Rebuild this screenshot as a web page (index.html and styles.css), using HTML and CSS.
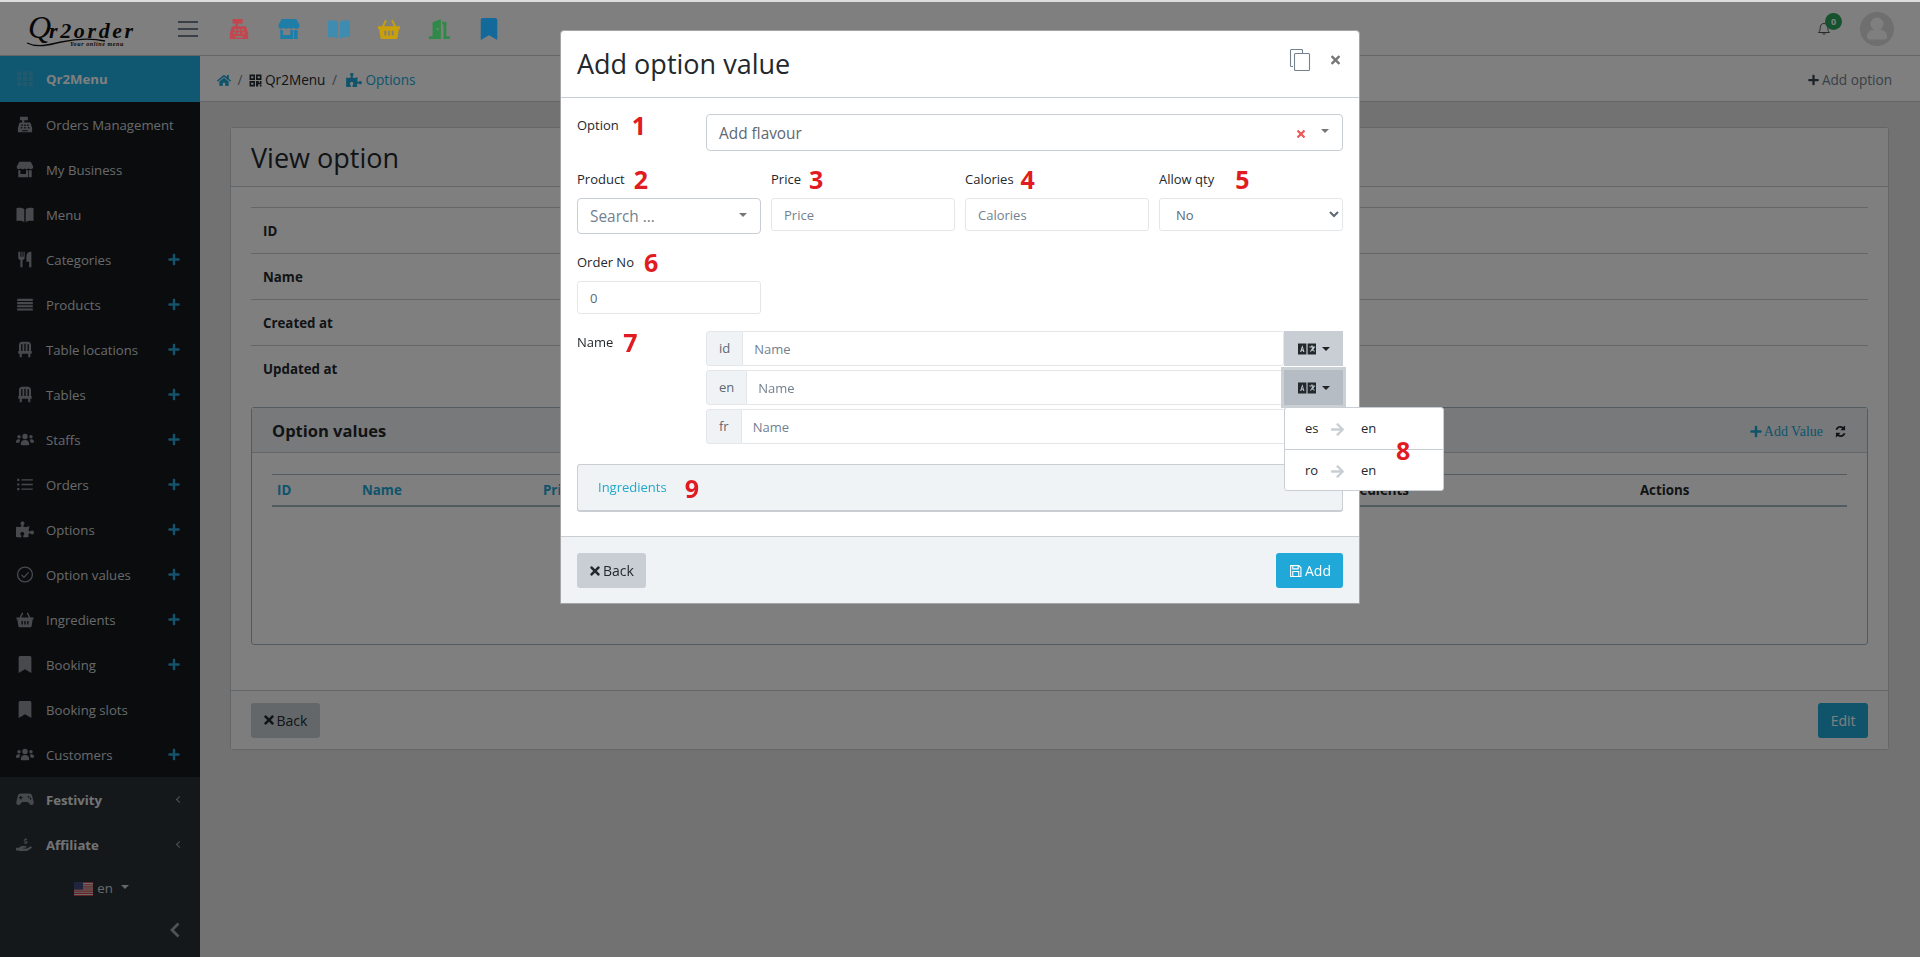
FILE: index.html
```html
<!DOCTYPE html>
<html lang="en">
<head>
<meta charset="utf-8">
<title>Add option value</title>
<link rel="stylesheet" href="styles.css">
</head>
<body>
<svg class="sprite" aria-hidden="true">
  <symbol id="i-plus" viewBox="0 0 448 512"><path d="M416 208H272V64c0-17.67-14.33-32-32-32h-32c-17.67 0-32 14.33-32 32v144H32c-17.67 0-32 14.33-32 32v32c0 17.67 14.33 32 32 32h144v144c0 17.67 14.33 32 32 32h32c17.67 0 32-14.33 32-32V304h144c17.67 0 32-14.33 32-32v-32c0-17.67-14.33-32-32-32z"/></symbol>
  <symbol id="i-bookmark" viewBox="0 0 384 512"><path d="M0 512V48C0 21.49 21.49 0 48 0h288c26.51 0 48 21.49 48 48v464L192 400 0 512z"/></symbol>
  <symbol id="i-home" viewBox="0 0 576 512"><path d="M280.37 148.26L96 300.11V464a16 16 0 0 0 16 16l112.06-.29a16 16 0 0 0 15.92-16V368a16 16 0 0 1 16-16h64a16 16 0 0 1 16 16v95.64a16 16 0 0 0 16 16.05L464 480a16 16 0 0 0 16-16V300L295.67 148.26a12.19 12.19 0 0 0-15.3 0zM571.6 251.47L488 182.56V44.05a12 12 0 0 0-12-12h-56a12 12 0 0 0-12 12v72.61L318.47 43a48 48 0 0 0-61 0L4.34 251.47a12 12 0 0 0-1.6 16.9l25.5 31A12 12 0 0 0 45.15 301l235.22-193.74a12.19 12.19 0 0 1 15.3 0L530.9 301a12 12 0 0 0 16.9-1.6l25.5-31a12 12 0 0 0-1.7-16.93z"/></symbol>
  <symbol id="i-times" viewBox="0 0 352 512"><path d="M242.72 256l100.07-100.07c12.28-12.28 12.28-32.19 0-44.48l-22.24-22.24c-12.28-12.28-32.19-12.28-44.48 0L176 189.28 75.93 89.21c-12.28-12.28-32.19-12.28-44.48 0L9.21 111.45c-12.28 12.28-12.28 32.19 0 44.48L109.28 256 9.21 356.07c-12.28 12.28-12.28 32.19 0 44.48l22.24 22.24c12.28 12.28 32.2 12.28 44.48 0L176 322.72l100.07 100.07c12.28 12.28 32.2 12.28 44.48 0l22.24-22.24c12.28-12.28 12.28-32.19 0-44.48L242.72 256z"/></symbol>
  <symbol id="i-arrow" viewBox="0 0 448 512"><path d="M190.5 66.9l22.2-22.2c9.4-9.4 24.6-9.4 33.9 0L441 239c9.4 9.4 9.4 24.6 0 33.9L246.6 467.3c-9.4 9.4-24.6 9.4-33.9 0l-22.2-22.2c-9.5-9.5-9.3-25 .4-34.3L311.4 296H24c-13.3 0-24-10.7-24-24v-32c0-13.3 10.7-24 24-24h287.4L190.9 101.2c-9.8-9.3-10-24.8-.4-34.3z"/></symbol>
  <symbol id="i-puzzle" viewBox="0 0 576 512"><path d="M519.442 288.651c-41.519 0-59.5 31.593-82.058 31.593C377.409 320.244 432 144 432 144s-196.288 80-196.288-3.297c0-35.827 36.288-46.25 36.288-85.985C272 19.216 243.885 0 210.539 0c-34.654 0-66.366 18.891-66.366 56.346 0 41.364 31.711 59.277 31.711 81.75C175.885 207.719 0 166.758 0 166.758v333.237s178.635 41.047 178.635-28.662c0-22.473-40-40.107-40-81.471 0-37.456 29.25-56.346 63.577-56.346 33.673 0 61.788 19.216 61.788 54.717 0 39.735-36.288 50.158-36.288 85.985 0 60.803 129.675 25.73 181.23 25.73 0 0-34.725-120.101 25.827-120.101 35.962 0 46.423 36.152 86.308 36.152C556.712 416 576 387.99 576 354.443c0-34.199-18.962-65.792-56.558-65.792z"/></symbol>
  <symbol id="i-register" viewBox="0 0 24 24"><path fill-rule="evenodd" d="M5 1h11v5H11v3h7.5c.8 0 1.4.5 1.6 1.2L22 17v6H2v-6l1.900-6.800C4.100 9.500 4.700 9 5.500 9H8V6H5zM7 12v2h2v-2zm4 0v2h2v-2zm4 0v2h2v-2zM6 15.500v2h2v-2zm5 0v2h2v-2zm5 0v2h2v-2zM8 20v1.500h8V20z"/></symbol>
  <symbol id="i-store" viewBox="0 0 24 24"><path fill-rule="evenodd" d="M4 1h16l3.500 6.500c.5 2.500-1.300 4.300-3.500 4.300-1.300 0-2.300-.6-3-1.400-.7.800-1.700 1.400-3 1.400s-2-.6-2.500-1.400c-.6.800-1.500 1.400-2.800 1.400s-2-.6-2.700-1.400c-.7.800-1.800 1.400-3 1.400C1.700 11.800 0 10 .5 7.500zM2.500 13h3v5.500h8V13h3v10h-14zM17.500 13h4v10h-4z"/></symbol>
  <symbol id="i-book" viewBox="0 0 24 24"><path d="M0 3c4-1.200 8.500-.8 11 1.500V23C8.500 20.800 4 20.400 0 21zM24 3c-4-1.200-8.500-.8-11 1.500V23c2.500-2.200 7-2.600 11-2z"/></symbol>
  <symbol id="i-basket" viewBox="0 0 24 24"><path fill-rule="evenodd" d="M7.800 2l1.800 1-3 6h10.800l-3-6 1.800-1 3.500 7H24v3h-1.200l-1.500 9.500c-.1.900-.8 1.500-1.700 1.500H4.400c-.9 0-1.600-.6-1.700-1.500L1.200 12H0V9h4.300zM7 14v5h2v-5zm4 0v5h2v-5zm4 0v5h2v-5z"/></symbol>
  <symbol id="i-door" viewBox="0 0 24 24"><path fill-rule="evenodd" d="M5 20V4.500L14 1v22H1v-3zM10.500 11a1.200 1.200 0 1 0 .01 0zM15.500 4H20v16h4v3h-7V7h-1.500z"/></symbol>
  <symbol id="i-grid" viewBox="0 0 24 24"><path d="M1 2h6v6H1zM9 2h6v6H9zM17 2h6v6h-6zM1 9.500h6v6H1zM9 9.500h6v6H9zM17 9.500h6v6h-6zM1 17h6v6H1zM9 17h6v6H9zM17 17h6v6h-6z"/></symbol>
  <symbol id="i-qr" viewBox="0 0 24 24"><path fill-rule="evenodd" d="M1 1h10v10H1zM4 4v4h4V4zM13 1h10v10H13zM16 4v4h4V4zM1 13h10v10H1zM4 16v4h4v-4zM13 13h5v3h2v-3h3v6h-6v4h-4zM20 20h3v3h-3z"/></symbol>
  <symbol id="i-utensils" viewBox="0 0 24 24"><path d="M4 1h1.500v7H7V1h1.500v7H10V1h1.500v8.500c0 1.800-1.300 3-3 3.300V23H5.500V12.800c-1.700-.3-3-1.500-3-3.300V1zM21 1v22h-3.200v-8H14V7c0-4 3.500-6 7-6z"/></symbol>
  <symbol id="i-list" viewBox="0 0 24 24"><path d="M1 4h22v3H1zM1 8.500h22v3H1zM1 13h22v3H1zM1 17.500h22v3H1z"/></symbol>
  <symbol id="i-listul" viewBox="0 0 24 24"><path d="M1 4h3v3H1zM7 4.500h16v2H7zM1 10.500h3v3H1zM7 11h16v2H7zM1 17h3v3H1zM7 17.500h16v2H7z"/></symbol>
  <symbol id="i-chair" viewBox="0 0 24 24"><path fill-rule="evenodd" d="M8 1h8c2.800 0 4.500 2 4.500 4.500V14h1v4h-2v5h-3v-5H7.500v5h-3v-5h-2v-4h1V5.500C3.500 3 5.200 1 8 1zM6.500 5v9h2V4.500C7.300 4 6.500 4.200 6.500 5zM11 4v10h2V4zM15.500 4.500V14h2V5c0-.8-.8-1-2-.5z"/></symbol>
  <symbol id="i-users" viewBox="0 0 30 24"><circle cx="15" cy="7" r="4.500"/><circle cx="5" cy="7.500" r="2.800"/><circle cx="25" cy="7.500" r="2.800"/><path d="M8 20c0-4.500 2.500-7 7-7s7 2.500 7 7c0 1-.8 1.500-1.500 1.500h-11C8.800 21.500 8 21 8 20zM0 16c0-3 1.500-4.500 4-4.500 1.500 0 2.500.5 3.200 1.200C6 14 5.800 15.500 5.700 17.500H1.500C.5 17.500 0 17 0 16zM30 16c0-3-1.500-4.500-4-4.500-1.500 0-2.500.5-3.200 1.200 1.200 1.300 1.400 2.800 1.500 4.800h4.200c1 0 1.500-.5 1.500-1.500z"/></symbol>
  <symbol id="i-check" viewBox="0 0 24 24"><circle cx="12" cy="12" r="10.500" fill="none" stroke="currentColor" stroke-width="1.800"/><path d="M7 12.500l3.500 3.500L17 9" fill="none" stroke="currentColor" stroke-width="1.800"/></symbol>
  <symbol id="i-festive" viewBox="0 0 30 24"><path fill-rule="evenodd" d="M8 2h14c3 0 4.500 1.500 5 4l2.500 10c.5 3-1.500 5-3.500 5-1.800 0-3-1-4-2.500L20 16H10l-2 2.500C7 20 5.800 21 4 21c-2 0-4-2-3.500-5L3 6c.5-2.500 2-4 5-4zM7 6v2H5v2h2v2h2v-2h2V8H9V6zM21 6a1.500 1.500 0 1 0 .01 0zM24 9a1.500 1.500 0 1 0 .01 0z"/></symbol>
  <symbol id="i-hand" viewBox="0 0 30 24"><path d="M0 17.500h5c2-2 4-3 6-3h5c1.500 0 2 2.500 0 3h-4v1h6l6-3c2-1 3.500 1 2 2.500l-6 4c-.8.500-1.500.7-2.500.7H5.500L4 22H0z"/><path d="M15 1.500h2v1.200c1 .2 1.800.7 2 1.500l-1.500.8c-.3-.5-1-.8-1.700-.8-.7 0-1.200.3-1.200.7 0 1.200 4.600.6 4.600 3.200 0 1-.9 1.800-2.200 2V11.500h-2v-1.400c-1-.2-1.900-.7-2.200-1.600l1.600-.7c.3.600 1 1 1.700 1 .8 0 1.300-.3 1.300-.7 0-1.200-4.600-.6-4.600-3.200 0-1 .8-1.800 2.200-2z"/></symbol>
  <symbol id="i-save" viewBox="0 0 24 24"><path fill="none" stroke="currentColor" stroke-width="2" d="M3 2h15l4 4v16H3zM7 2v6h10V2M7 22v-9h11v9"/></symbol>
  <symbol id="i-lang" viewBox="0 0 30 20"><path fill-rule="evenodd" d="M0 1h14v18H0zM7 4L3.500 15h2l.6-2h2l.6 2h2L7.500 4zM6.600 11l.7-3 .7 3zM16 1h14v18H16zM22 4v2h-3v1.500h5c-.3 1-1 2-2.500 3 .5.500 1 1 1.500 1.200-1 .6-2 1-3.300 1.300l.6 1.500c1.500-.4 3-1 4-1.800 1 .8 2 1.400 3.200 1.800l.5-1.500c-1-.3-1.900-.7-2.700-1.300 1-1 1.900-2.300 2.200-4h1V6h-4V4z"/></symbol>
  <symbol id="i-sync" viewBox="0 0 24 24"><path d="M20.500 1v8.500H12l3-3c-3-2.200-7-1.300-8.500 2.200H2.800C4.500 2.800 11-.2 17 3.500zM3.500 23v-8.500H12l-3 3c3 2.200 7 1.300 8.500-2.200h3.700c-1.700 5.900-8.200 8.900-14.200 5.200z"/></symbol>
</svg>

<div class="topline"></div>
<header class="navbar">
  <div class="logo"><span class="logo-q">Q</span><span class="logo-rest">r2order</span><span class="logo-tag">Your online menu</span>
    <svg class="logo-swash" viewBox="0 0 110 30"><path d="M1 24c10 5 22 2 34-1 14-3 30-4 44-1" fill="none" stroke="#111" stroke-width="1.300"/></svg>
  </div>
  <div class="burger"><span></span><span></span><span></span></div>
  <nav class="quick">
    <svg class="qi q-red"><use href="#i-register"/></svg>
    <svg class="qi q-blue"><use href="#i-store"/></svg>
    <svg class="qi q-sky"><use href="#i-book"/></svg>
    <svg class="qi q-yellow"><use href="#i-basket"/></svg>
    <svg class="qi q-green"><use href="#i-door"/></svg>
    <svg class="qi q-navy"><use href="#i-bookmark"/></svg>
  </nav>
  <div class="nav-right">
    <div class="bell">
      <svg viewBox="0 0 24 24" class="bell-i"><path fill="none" stroke="currentColor" stroke-width="1.600" d="M12 2.500c-4 0-6.500 3-6.500 7 0 5-1 6.500-3 8.500h19c-2-2-3-3.500-3-8.500 0-4-2.500-7-6.500-7zM9.500 18c0 4 5 4 5 0"/></svg>
      <span class="badge">0</span>
    </div>
    <div class="avatar"><svg viewBox="0 0 34 34"><circle cx="17" cy="12" r="6.500"/><path d="M7 25c0-5 3-7 6-7h8c3 0 6 2 6 7 0 1.500-1 2.500-2.500 2.500h-15C8 27.500 7 26.500 7 25z"/></svg></div>
  </div>
</header>

<div class="layout">
  <aside class="sidebar">
    <div class="side-item active"><svg class="si"><use href="#i-grid"/></svg><span>Qr2Menu</span></div>
    <div class="side-list">
      <div class="side-item"><svg class="si"><use href="#i-register"/></svg><span>Orders Management</span></div>
      <div class="side-item"><svg class="si"><use href="#i-store"/></svg><span>My Business</span></div>
      <div class="side-item"><svg class="si"><use href="#i-book"/></svg><span>Menu</span></div>
      <div class="side-item"><svg class="si"><use href="#i-utensils"/></svg><span>Categories</span><svg class="sp"><use href="#i-plus"/></svg></div>
      <div class="side-item"><svg class="si"><use href="#i-list"/></svg><span>Products</span><svg class="sp"><use href="#i-plus"/></svg></div>
      <div class="side-item"><svg class="si"><use href="#i-chair"/></svg><span>Table locations</span><svg class="sp"><use href="#i-plus"/></svg></div>
      <div class="side-item"><svg class="si"><use href="#i-chair"/></svg><span>Tables</span><svg class="sp"><use href="#i-plus"/></svg></div>
      <div class="side-item"><svg class="si"><use href="#i-users"/></svg><span>Staffs</span><svg class="sp"><use href="#i-plus"/></svg></div>
      <div class="side-item"><svg class="si"><use href="#i-listul"/></svg><span>Orders</span><svg class="sp"><use href="#i-plus"/></svg></div>
      <div class="side-item"><svg class="si"><use href="#i-puzzle"/></svg><span>Options</span><svg class="sp"><use href="#i-plus"/></svg></div>
      <div class="side-item"><svg class="si"><use href="#i-check"/></svg><span>Option values</span><svg class="sp"><use href="#i-plus"/></svg></div>
      <div class="side-item"><svg class="si"><use href="#i-basket"/></svg><span>Ingredients</span><svg class="sp"><use href="#i-plus"/></svg></div>
      <div class="side-item"><svg class="si"><use href="#i-bookmark"/></svg><span>Booking</span><svg class="sp"><use href="#i-plus"/></svg></div>
      <div class="side-item"><svg class="si"><use href="#i-bookmark"/></svg><span>Booking slots</span></div>
      <div class="side-item"><svg class="si"><use href="#i-users"/></svg><span>Customers</span><svg class="sp"><use href="#i-plus"/></svg></div>
    </div>
    <div class="side-bottom">
      <div class="side-item group"><svg class="si"><use href="#i-festive"/></svg><span>Festivity</span><i class="chev"></i></div>
      <div class="side-item group"><svg class="si"><use href="#i-hand"/></svg><span>Affiliate</span><i class="chev"></i></div>
      <div class="lang">
        <svg class="flag" viewBox="0 0 19 14"><rect width="19" height="14" fill="#d9d9d9"/><path fill="#c8404a" d="M0 0h19v1.100H0zM0 2.200h19v1.100H0zM0 4.300h19v1.100H0zM0 6.500h19v1.100H0zM0 8.600h19v1.100H0zM0 10.800h19v1.100H0zM0 12.900h19V14H0z"/><rect width="9" height="7.600" fill="#3c4a7a"/></svg>
        <span>en</span><i class="caret"></i>
      </div>
      <div class="collapse"><svg viewBox="0 0 12 16"><path d="M9.500 1.500L3 8l6.500 6.500" fill="none" stroke="currentColor" stroke-width="2.800"/></svg></div>
    </div>
  </aside>

  <main class="main">
    <div class="crumbs">
      <svg class="c-i c-blue c-home"><use href="#i-home"/></svg>
      <span class="c-sep">/</span>
      <svg class="c-i c-dark"><use href="#i-qr"/></svg>
      <span>Qr2Menu</span>
      <span class="c-sep">/</span>
      <svg class="c-i c-blue c-puz"><use href="#i-puzzle"/></svg>
      <span class="c-link">Options</span>
      <a class="c-add"><svg class="c-plus"><use href="#i-plus"/></svg>Add option</a>
    </div>
    <div class="content">
      <section class="card">
        <div class="card-head"><h2>View option</h2></div>
        <div class="card-body">
          <table class="details">
            <tr><th>ID</th><td></td></tr>
            <tr><th>Name</th><td></td></tr>
            <tr><th>Created at</th><td></td></tr>
            <tr><th>Updated at</th><td></td></tr>
          </table>
          <section class="inner">
            <div class="inner-head">
              <strong>Option values</strong>
              <span class="inner-tools"><span class="addval"><svg><use href="#i-plus"/></svg>Add Value</span><svg class="sync"><use href="#i-sync"/></svg></span>
            </div>
            <div class="inner-body">
              <table class="values">
                <thead><tr>
                  <th class="col-id link">ID</th><th class="col-name link">Name</th><th class="col-m link">Price</th><th class="col-m">Calories</th><th class="col-m">Allow qty</th><th class="col-ing">Ingredients</th><th class="col-act">Actions</th>
                </tr></thead>
              </table>
            </div>
          </section>
        </div>
        <div class="card-foot">
          <button class="btn btn-grey"><svg class="b-i"><use href="#i-times"/></svg>Back</button>
          <button class="btn btn-edit">Edit</button>
        </div>
      </section>
    </div>
  </main>
</div>

<div class="backdrop">
  <div class="modal">
    <div class="modal-head">
      <h3>Add option value</h3>
      <svg class="copy" viewBox="0 0 20 22"><path fill="none" stroke="currentColor" stroke-width="1.100" d="M3 17.500H1.500a1 1 0 0 1-1-1V1.500a1 1 0 0 1 1-1h10a1 1 0 0 1 1 1V4M5.500 4.500h13a1 1 0 0 1 1 1v15a1 1 0 0 1-1 1h-13a1 1 0 0 1-1-1v-15a1 1 0 0 1 1-1z"/></svg>
      <svg class="close"><use href="#i-times"/></svg>
    </div>
    <div class="modal-body">
      <div class="row-side first">
        <label class="lbl">Option <b class="ann a1">1</b></label>
        <div class="sel2 tall"><span>Add flavour</span><svg class="clear"><use href="#i-times"/></svg><i class="caret dark"></i></div>
      </div>
      <div class="row-four">
        <div class="fld"><label class="lbl">Product <b class="ann a2">2</b></label><div class="sel2 pick"><span class="muted">Search ...</span><i class="caret dark"></i></div></div>
        <div class="fld"><label class="lbl">Price <b class="ann a3">3</b></label><input class="inp" placeholder="Price"></div>
        <div class="fld"><label class="lbl">Calories <b class="ann a4">4</b></label><input class="inp" placeholder="Calories"></div>
        <div class="fld"><label class="lbl">Allow qty <b class="ann a5">5</b></label><select class="inp"><option>No</option></select></div>
      </div>
      <div class="row-four second">
        <div class="fld"><label class="lbl">Order No <b class="ann a6">6</b></label><input class="inp" value="0"></div>
      </div>
      <div class="row-side names">
        <label class="lbl">Name <b class="ann a7">7</b></label>
        <div class="groups">
          <div class="igroup"><span class="pre">id</span><input placeholder="Name"><button class="tbtn"><svg><use href="#i-lang"/></svg><i class="caret black"></i></button></div>
          <div class="igroup"><span class="pre">en</span><input placeholder="Name"><button class="tbtn on"><svg><use href="#i-lang"/></svg><i class="caret black"></i></button>
            <div class="menu">
              <div class="menu-row"><span>es</span><svg><use href="#i-arrow"/></svg><span>en</span></div>
              <div class="menu-row"><span>ro</span><svg><use href="#i-arrow"/></svg><span>en</span></div>
              <b class="ann a8">8</b>
            </div>
          </div>
          <div class="igroup"><span class="pre">fr</span><input placeholder="Name"></div>
        </div>
      </div>
      <div class="ingredients"><a>Ingredients</a><b class="ann a9">9</b></div>
    </div>
    <div class="modal-foot">
      <button class="btn btn-light"><svg class="b-i"><use href="#i-times"/></svg>Back</button>
      <button class="btn btn-add"><svg class="b-s"><use href="#i-save"/></svg>Add</button>
    </div>
  </div>
</div>
</body>
</html>
```
FILE: styles.css
```css
* { box-sizing: border-box; }
html, body { margin: 0; height: 957px; overflow: hidden; }
body { font-family: "Open Sans", sans-serif; font-size: 13.3px; line-height: 1.5; color: #23282c; background: #e4e5e6; }
svg { fill: currentColor; display: block; }
.sprite { width: 0; height: 0; position: absolute; }
h2, h3 { margin: 0; font-weight: 400; }
button { font-family: inherit; }

.topline { height: 2px; background: #dcdcdc; position: relative; z-index: 30; }
.navbar { height: 54px; background: #fff; border-bottom: 1px solid #c8ced3; display: flex; align-items: center; }
.logo { width: 178px; padding-left: 28px; position: relative; font-family: "Liberation Serif", serif; font-style: italic; font-weight: 700; color: #111; white-space: nowrap; }
.logo-q { font-size: 32px; line-height: 1; font-weight: 400; }
.logo-rest { font-size: 22px; letter-spacing: 2.6px; margin-left: -2px; }
.logo-tag { position: absolute; left: 70px; top: 30px; font-size: 6px; line-height: 1; letter-spacing: .6px; }
.logo-swash { position: absolute; left: 26px; top: 8px; width: 110px; height: 30px; }
.burger { width: 20px; display: flex; flex-direction: column; gap: 5px; }
.burger span { height: 2px; background: #73818f; }
.quick { display: flex; gap: 28px; margin-left: 30px; position: relative; z-index: 20; }
.qi { width: 22px; height: 22px; }
.q-red { color: #c2474e; }
.q-blue { color: #1f7ea8; }
.q-sky { color: #3e8db0; }
.q-yellow { color: #c9a00a; }
.q-green { color: #2f8a48; }
.q-navy { color: #14699b; }
.nav-right { margin-left: auto; display: flex; align-items: center; padding-right: 26px; gap: 29px; }
.bell { position: relative; width: 14px; height: 18px; }
.bell-i { width: 14px; height: 18px; color: #4a4a4a; }
.badge { position: absolute; left: 8px; top: -7px; width: 17px; height: 17px; border-radius: 50%; background: #2ea55f; color: #fff; font-size: 9px; font-weight: 700; line-height: 17px; text-align: center; }
.avatar { width: 34px; height: 34px; border-radius: 50%; background: #dedede; color: #fff; overflow: hidden; }
.avatar svg { width: 34px; height: 34px; }

.layout { display: flex; height: 901px; }
.sidebar { width: 200px; flex: none; background: #15191d; color: #cfd3d6; display: flex; flex-direction: column; }
.side-item { height: 45px; display: flex; align-items: center; position: relative; padding: 2px 0 0 46px; font-size: 13.2px; }
.si { position: absolute; left: 16px; top: 14px; width: 18px; height: 17px; color: #8f959b; }
.sp { position: absolute; left: 168px; top: 16px; width: 12px; height: 13px; color: #2aa5d8; }
.side-item.active { height: 46px; background: #20aee3; color: #fff; font-weight: 700; }
.side-item.active .si { color: #6eb8d8; opacity: .45; }
.side-list { height: 675px; }
.side-bottom { flex: 1; background: #2a3036; }
.group { font-weight: 700; color: #e4e7ea; }
.chev { position: absolute; left: 177px; top: 20px; width: 5px; height: 5px; border-left: 1px solid #a0a5aa; border-bottom: 1px solid #a0a5aa; transform: rotate(45deg); }
.lang { display: flex; justify-content: center; align-items: center; height: 43px; gap: 4px; padding-left: 3px; }
.lang .caret { margin-left: 4px; margin-top: -3px; border-top-color: #c8ced3; }
.flag { width: 19px; height: 14px; }
.caret { display: inline-block; width: 0; height: 0; border: 4px solid transparent; border-bottom: 0; border-top-color: #999; }
.caret.dark { border-top-color: #777; }
.caret.black { border-top-color: #222; }
.collapse { height: 40px; display: flex; align-items: center; justify-content: flex-end; padding-right: 19px; color: #a0a5aa; }
.collapse svg { width: 12px; height: 16px; }

.main { flex: 1; display: flex; flex-direction: column; min-width: 0; }
.crumbs { height: 46px; flex: none; background: #fff; border-bottom: 1px solid #c8ced3; display: flex; align-items: center; padding: 3px 28px 0 17px; font-size: 13.6px; color: #23282c; gap: 3px; }
.c-i { width: 14px; height: 13px; }
.c-home { width: 14px; }
.c-puz { width: 16px; height: 14px; margin-left: 3px; }
.c-blue { color: #20a8d8; }
.c-dark { color: #23282c; width: 13px; height: 13px; }
.c-sep { color: #73818f; margin: 0 3.500px; }
.c-link { color: #20a8d8; }
.c-add { margin-left: auto; color: #73818f; display: flex; align-items: center; gap: 3px; }
.c-plus { width: 11px; height: 12px; color: #3c4650; }
.content { padding: 25px 31px 0 30px; }
.card { background: #fff; border: 1px solid #c8ced3; border-radius: 3px; }
.card-head { height: 59px; background: #fafbfc; border-bottom: 1px solid #c8ced3; padding: 2px 20px 0; display: flex; align-items: center; }
.card-head h2 { font-size: 27px; color: #23282c; }
.card-body { padding: 20px 20px 45px; }
.details { width: 100%; border-collapse: collapse; margin-bottom: 15px; }
.details th { height: 46px; padding: 2px 12px 0; text-align: left; font-weight: 700; border-top: 1px solid #c8ced3; width: 20%; }
.details td { border-top: 1px solid #c8ced3; }
.inner { border: 1px solid #a4b7c1; border-radius: 3px; height: 238px; }
.inner-head { height: 45px; background: #f0f3f5; border-bottom: 1px solid #c8ced3; display: flex; align-items: center; justify-content: space-between; padding: 3px 20px 0; }
.inner-head strong { font-size: 16.5px; }
.inner-tools { display: flex; align-items: center; gap: 11px; }
.addval { display: flex; align-items: center; gap: 2px; font-family: "Liberation Serif", serif; font-size: 14px; color: #20a8d8; }
.addval svg { width: 12px; height: 13px; }
.sync { width: 13px; height: 13px; color: #23282c; }
.inner-body { padding: 21px 20px; }
.values { width: 100%; table-layout: fixed; border-collapse: collapse; border-top: 1px solid #a4b7c1; border-bottom: 2px solid #a4b7c1; }
.values th { height: 32px; padding: 2px 5px 0; text-align: left; font-weight: 700; }
.values .link { color: #20a8d8; }
.col-id { width: 85px; }
.col-name { width: 181px; }
.col-m { width: 263.3px; }
.col-ing { width: 307px; }
.card-foot { height: 59px; background: #fafbfc; border-top: 1px solid #c8ced3; padding: 12px 20px; display: flex; justify-content: space-between; }
.btn { height: 35px; border: 0; border-radius: 3px; padding: 0 12.500px; font-size: 14px; display: inline-flex; align-items: center; gap: 3px; }
.b-i { width: 10px; height: 14px; }
.b-s { width: 13px; height: 14px; }
.btn-grey { background: #c8ced3; color: #23282c; }
.btn-edit { background: #20a8d8; color: #fff; }

.backdrop { position: fixed; left: 0; right: 0; top: 2px; bottom: 0; background: rgba(0, 0, 0, .5); z-index: 10; display: flex; justify-content: center; align-items: flex-start; padding-top: 28px; }
.modal { width: 800px; height: 574px; background: #fff; border: 1px solid #a4a4a4; border-radius: 4px 4px 0 0; display: flex; flex-direction: column; }
.modal-head { height: 67px; flex: none; border-bottom: 1px solid #c8ced3; display: flex; align-items: center; padding: 0 19px 0 16px; }
.modal-head h3 { font-size: 27px; color: #23282c; flex: 1; }
.copy { width: 22px; height: 22px; color: #73818f; margin: -8px 20px 0 0; }
.close { width: 9px; height: 14px; color: #777; margin-top: -8px; }
.modal-body { flex: 1; padding: 16px 16px 0; }
.lbl { display: flex; align-items: center; height: 20px; font-size: 13px; line-height: 20px; color: #23282c; position: relative; white-space: nowrap; }
.ann { font-family: "Open Sans", sans-serif; font-weight: 700; font-size: 25px; line-height: 20px; color: #e11b22; }
.a1 { margin-left: 13px; }
.a2 { margin-left: 9px; }
.a3 { margin-left: 8px; }
.a4 { margin-left: 7px; }
.a5 { margin-left: 21px; }
.a6 { margin-left: 10px; }
.a7 { margin-left: 10px; }
.a8 { position: absolute; left: 111px; top: 32px; }
.a9 { margin-left: 18px; }
.row-side { display: grid; grid-template-columns: 129px 637px; }
.row-side.first .lbl { margin-top: 1px; }
.row-four { display: grid; grid-template-columns: repeat(4, 184px); column-gap: 10px; margin-top: 18px; }
.row-four.second { margin-top: 18px; }
.fld .lbl { margin-bottom: 9px; }
.sel2 { border: 1px solid #c8ced3; border-radius: 4px; display: flex; align-items: center; color: #5c6873; font-size: 15.4px; padding: 2px 0 0 12px; position: relative; }
.sel2 .caret { position: absolute; right: 13px; top: 14px; }
.sel2.tall { height: 37px; }
.sel2.pick { height: 36px; }
.muted { color: #73818f; }
.clear { position: absolute; right: 37px; top: 12px; width: 8px; height: 14px; color: #e55; }
.inp { display: block; width: 100%; height: 33px; border: 1px solid #e4e7ea; border-radius: 3px; padding: 0 12px; font: 13px "Open Sans", sans-serif; color: #5c6873; background: #fff; outline: 0; }
.inp::placeholder, .igroup input::placeholder { color: #73818f; opacity: 1; }
.names { margin-top: 17px; }
.names .lbl { margin-top: 1px; }
.groups { display: flex; flex-direction: column; gap: 4px; }
.igroup { display: flex; height: 35px; position: relative; }
.pre { background: #f0f3f5; border: 1px solid #e4e7ea; border-radius: 3px 0 0 3px; padding: 0 12px; font-size: 13px; color: #5c6873; display: flex; align-items: center; }
.igroup input { flex: 1; min-width: 0; border: 1px solid #e4e7ea; border-left: 0; padding: 0 12px 0 11px; font: 13px "Open Sans", sans-serif; outline: 0; border-radius: 0 3px 3px 0; }
.tbtn { width: 59px; flex: none; background: #c8ced3; border: 0; display: flex; align-items: center; justify-content: center; gap: 6px; padding: 0; }
.tbtn svg { width: 18px; height: 12px; color: #23282c; }
.tbtn.on { background: #b5bcc3; box-shadow: 0 0 0 3px #cbd0d5; }
.menu { position: absolute; right: -101px; top: 37px; width: 160px; height: 84px; background: #fff; border: 1px solid #c8ced3; border-radius: 3px; z-index: 5; }
.menu-row { height: 41px; display: flex; align-items: center; padding: 1px 0 0 20px; font-size: 13px; color: #23282c; }
.menu-row + .menu-row { border-top: 1px solid #c8ced3; height: 42px; }
.menu-row span:first-child { width: 26px; }
.menu-row svg { width: 13px; height: 15px; color: #c8ced3; margin: 0 17px 0 0; }
.ingredients { height: 48px; margin-top: 20px; background: #f0f3f5; border: 1px solid #c8ced3; border-bottom-width: 2px; border-radius: 3px; display: flex; align-items: center; padding-left: 20px; font-size: 13px; }
.ingredients a { color: #20a8c8; }
.modal-foot { height: 67px; flex: none; background: #f0f3f5; border-top: 1px solid #c8ced3; padding: 16px 16px 0; display: flex; justify-content: space-between; }
.btn-light { background: #c8ced3; color: #23282c; }
.btn-add { background: #20a8d8; color: #fff; }
.modal-foot .btn { padding: 0 12px 0 13px; }
```
